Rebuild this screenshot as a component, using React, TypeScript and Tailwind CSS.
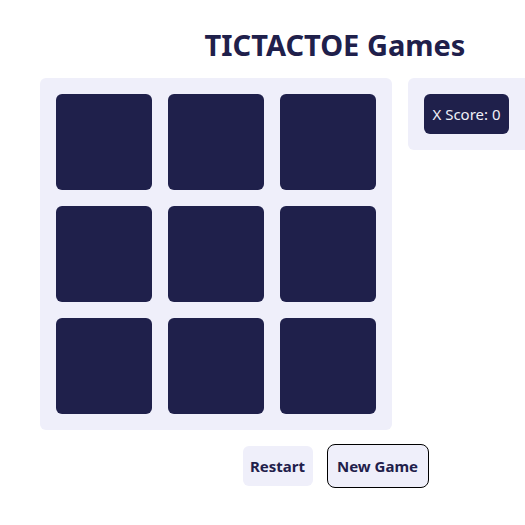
export default function App() {
  const cells = Array.from({ length: 9 }, (_, i) => i);
  return (
    <div className="w-full overflow-hidden bg-white font-['Noto_Sans','Open_Sans',sans-serif] text-[#1f204b]">
      <div className="flex w-[670px] flex-col items-center pt-[26px]">
        <h1 className="text-[29px] font-bold leading-[38px]">TICTACTOE Games</h1>
        <div className="mt-[14px] flex items-start gap-4">
          <div className="grid grid-cols-3 gap-4 rounded-md bg-[#efeffa] p-4">
            {cells.map((c) => (
              <button key={c} className="h-24 w-24 rounded-md bg-[#1f204b]" />
            ))}
          </div>
          <div className="w-[222px] rounded-md bg-[#efeffa] p-4">
            <div className="inline-flex h-10 w-[85px] items-center justify-center rounded-md bg-[#1f204b] text-[15px] text-[#f0f0f8]">
              X Score: 0
            </div>
          </div>
        </div>
        <div className="mt-[14px] flex items-center gap-[14px] pl-px">
          <button className="h-10 w-[70px] rounded-md bg-[#efeffa] text-[15px] font-bold">Restart</button>
          <button className="h-11 w-[102px] rounded-lg border border-black bg-[#efeffa] text-[15px] font-bold">
            New Game
          </button>
        </div>
      </div>
    </div>
  );
}
